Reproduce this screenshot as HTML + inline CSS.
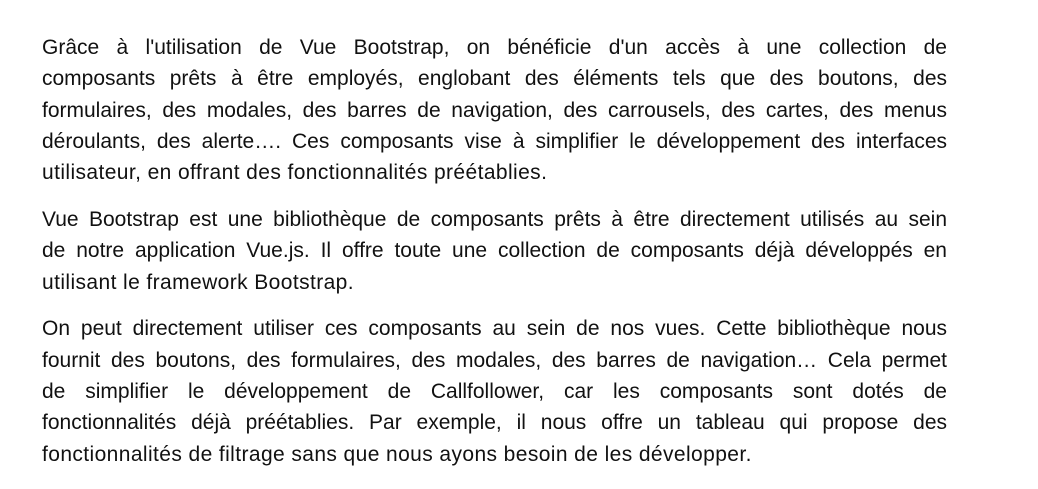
<!DOCTYPE html>
<html><head><meta charset="utf-8"><style>
html,body{margin:0;padding:0;background:#fff;width:1038px;height:486px;overflow:hidden}
body{font-family:"Liberation Sans",sans-serif;font-size:21px;color:#111}
.wrap{position:absolute;left:42px;width:905px;top:36px}
.l{height:31.3px;line-height:24px;text-align:justify;text-align-last:justify;word-spacing:0;white-space:normal}
.e{text-align-last:left;letter-spacing:0.4px}
.p{margin-bottom:15.5px}
</style></head><body><div class="wrap">
<div class="p">
<div class="l">Grâce à l'utilisation de Vue Bootstrap, on bénéficie d'un accès à une collection de</div>
<div class="l">composants prêts à être employés, englobant des éléments tels que des boutons, des</div>
<div class="l">formulaires, des modales, des barres de navigation, des carrousels, des cartes, des menus</div>
<div class="l">déroulants, des alerte…. Ces composants vise à simplifier le développement des interfaces</div>
<div class="l e">utilisateur, en offrant des fonctionnalités préétablies.</div>
</div>
<div class="p">
<div class="l">Vue Bootstrap est une bibliothèque de composants prêts à être directement utilisés au sein</div>
<div class="l">de notre application Vue.js. Il offre toute une collection de composants déjà développés en</div>
<div class="l e">utilisant le framework Bootstrap.</div>
</div>
<div class="p">
<div class="l">On peut directement utiliser ces composants au sein de nos vues. Cette bibliothèque nous</div>
<div class="l">fournit des boutons, des formulaires, des modales, des barres de navigation… Cela permet</div>
<div class="l">de simplifier le développement de Callfollower, car les composants sont dotés de</div>
<div class="l">fonctionnalités déjà préétablies. Par exemple, il nous offre un tableau qui propose des</div>
<div class="l e">fonctionnalités de filtrage sans que nous ayons besoin de les développer.</div>
</div>
</div></body></html>
